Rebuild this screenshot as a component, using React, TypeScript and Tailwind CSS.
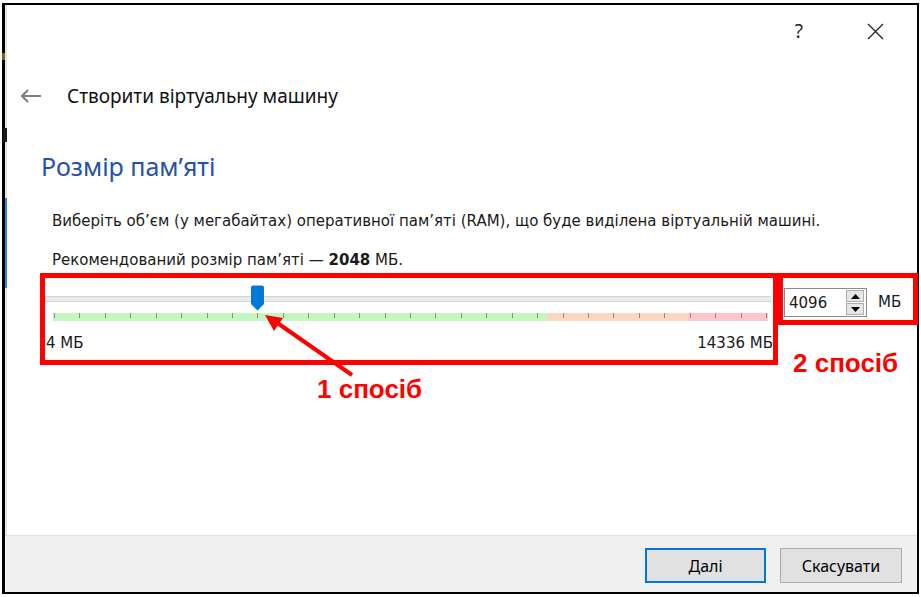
const TICKS = Array.from({ length: 29 }, (_, i) => i);

const body = "font-['DejaVu_Sans',sans-serif] text-[15px] text-[#1a1a1a]";
const ui = "font-['Noto_Sans',sans-serif]";

function Slider() {
  return (
    <div className="w-[727px]">
      <div className="relative h-[28px] pt-[11px]">
        <div className="h-[6px] border-y border-[#d4d4d4] bg-[#ebebeb]" />
        <svg className="absolute left-[206px] top-0" width="15" height="26" viewBox="0 0 15 26">
          <path d="M1 2.5 Q1 0.5 3 0.5 H12 Q14 0.5 14 2.5 V19 L7.5 25.5 L1 19 Z" fill="#0078d7" />
        </svg>
      </div>
      <div className="relative ml-[9px] flex h-[8px] w-[715px]">
        <div className="w-[494px] bg-[#c4f6bf]" />
        <div className="w-[141px] bg-[#fdd6c2]" />
        <div className="w-[80px] bg-[#ffc7c9]" />
        {TICKS.map((i) => (
          <span
            key={i}
            className="absolute top-0 h-[5px] w-px bg-[#8c8c8c]"
            style={{ left: 1 + i * 25.43 }}
          />
        ))}
      </div>
      <div className={`mt-[13px] flex h-[18px] items-center justify-between leading-[18px] ${body}`}>
        <span className="ml-[2px]">4 МБ</span>
        <span className="mr-[-2px]">14336 МБ</span>
      </div>
    </div>
  );
}

function SpinBox() {
  return (
    <div className="ml-[13px] mt-[3px] flex items-center">
      <div className="flex h-[29px] w-[83px] items-center justify-between border border-[#8a8a8a] bg-white pl-[4px] pr-[2px]">
        <span className={`leading-[18px] ${body}`}>4096</span>
        <div className="flex flex-col gap-px">
          <div className="flex h-[12px] w-[18px] items-center justify-center border border-[#adadad] bg-[#e6e6e6]">
            <svg width="9" height="5" viewBox="0 0 9 5">
              <path d="M0 5 L4.5 0 L9 5 Z" fill="#000" />
            </svg>
          </div>
          <div className="flex h-[12px] w-[18px] items-center justify-center border border-[#adadad] bg-[#e6e6e6]">
            <svg width="9" height="5" viewBox="0 0 9 5">
              <path d="M0 0 L9 0 L4.5 5 Z" fill="#000" />
            </svg>
          </div>
        </div>
      </div>
      <span className={`ml-[11px] ${body}`}>МБ</span>
    </div>
  );
}

export default function App() {
  return (
    <div className="relative h-[597px] w-[921px] overflow-hidden bg-white pl-[2px] pt-[3px]">
      <div className="flex h-[591px] w-[917px] flex-col border-2 border-l-[3px] border-black">
        <div className="flex flex-1 flex-col border-l-2 border-[#e4e4e4] bg-white">
          {/* title bar */}
          <div className="flex h-[52px] items-center justify-end gap-[64px] pr-[33px]">
            <span className={`text-[19px] leading-none text-[#222] ${ui}`}>?</span>
            <svg width="17" height="17" viewBox="0 0 17 17">
              <path d="M1 1 L16 16 M16 1 L1 16" stroke="#222" strokeWidth="1.3" />
            </svg>
          </div>

          <div className="mt-[24px] flex h-[30px] items-center pl-[13px]">
            <svg width="22" height="14" viewBox="0 0 22 14">
              <path d="M21 7 H2 M8 1 L2 7 L8 13" stroke="#808080" strokeWidth="2.2" fill="none" />
            </svg>
            <span className={`ml-[25px] text-[19px] leading-[30px] text-[#111] ${ui}`}>
              Створити віртуальну машину
            </span>
          </div>

          <div className={`mt-[37px] h-[36px] pl-[34px] text-[25px] leading-[36px] text-[#2452aa] ${ui}`}>
            Розмір пам’яті
          </div>

          <div className={`mt-[27px] h-[20px] pl-[45px] leading-[20px] ${body}`}>
            Виберіть об’єм (у мегабайтах) оперативної пам’яті (RAM), що буде виділена віртуальній машині.
          </div>
          <div className={`mt-[19px] h-[20px] pl-[45px] leading-[20px] ${body}`}>
            Рекомендований розмір пам’яті — <b>2048</b> МБ.
          </div>

          <div className="mt-[15px] flex items-start pl-[37px]">
            <Slider />
            <SpinBox />
          </div>
        </div>

        <div className="flex h-[57px] items-start justify-end gap-[14px] border-t border-[#dfdfdf] bg-[#f0f0f0] pr-[15px] pt-[12px]">
          <button
            type="button"
            className={`h-[35px] w-[121px] border-2 border-[#0078d7] bg-[#e1e1e1] text-[16px] text-black ${ui}`}
          >
            <span className="underline underline-offset-2">Д</span>алі
          </button>
          <button
            type="button"
            className={`h-[35px] w-[122px] border border-[#adadad] bg-[#e1e1e1] text-[16px] text-black ${ui}`}
          >
            Скасувати
          </button>
        </div>
      </div>

      {/* edge artifacts of windows behind */}
      <span className="absolute left-[2px] top-[53px] h-[7px] w-[3px] bg-[#8a5a20]" />
      <span className="absolute left-[3px] top-[128px] h-[14px] w-[4px] bg-[#1a1a1a]" />
      <span className="absolute left-[5px] top-[198px] h-[90px] w-[2px] bg-[#2a8ae0]" />

      {/* annotations */}
      <div className="absolute left-[40px] top-[273px] h-[92px] w-[738px] border-[5px] border-[#ff0000]" />
      <div className="absolute left-[778px] top-[273px] h-[52px] w-[140px] border-[5px] border-[#ff0000]" />
      <svg className="pointer-events-none absolute left-0 top-0" width="921" height="597">
        <line x1="352" y1="375" x2="276" y2="322" stroke="#ff0000" strokeWidth="4" />
        <polygon points="265,315 283,318 274,331" fill="#ff0000" />
      </svg>
      <span className="absolute left-[317px] top-[374px] font-['Liberation_Sans',sans-serif] text-[26px] font-bold leading-[30px] text-[#ff0000]">
        1 спосіб
      </span>
      <span className="absolute left-[793px] top-[348px] font-['Liberation_Sans',sans-serif] text-[26px] font-bold leading-[30px] text-[#ff0000]">
        2 спосіб
      </span>
    </div>
  );
}
